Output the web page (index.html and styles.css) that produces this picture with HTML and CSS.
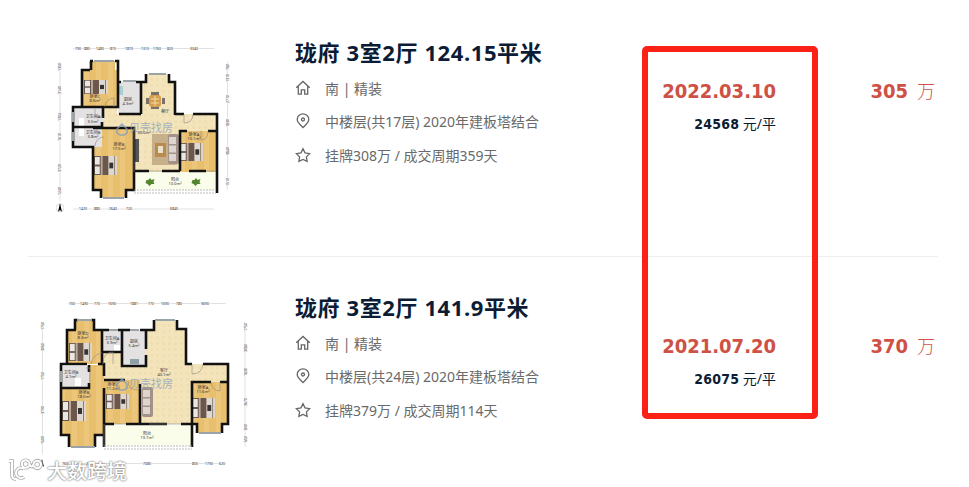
FILE: index.html
```
<!DOCTYPE html>
<html lang="zh-CN">

<head>
    <meta charset="UTF-8">
    <meta name="viewport" content="width=device-width, initial-scale=1.0">
    <title>珑府 成交记录</title>
    <link rel="stylesheet" href="styles.css">
</head>

<body>
    <!-- Shared shapes -->
    <svg class="defs" width="0" height="0">
        <symbol id="home" viewBox="0 0 16 16">
            <path d="M1.2 7.8 8 1.5l6.800 6.300M3.300 6.300v7.900h3V9.800h3.400v4.400h3V6.300" />
        </symbol>
        <symbol id="pin" viewBox="0 0 16 16">
            <path d="M8 14.600C5 11.500 2.200 9.200 2.200 6.400a5.800 5.600 0 0 1 11.600 0C13.800 9.200 11 11.500 8 14.600z" />
            <circle class="dot" cx="8" cy="6.500" r="1.500" />
        </symbol>
        <symbol id="star" viewBox="0 0 16 16">
            <path d="M8 1.800 10 5.900l4.700.7-3.300 3.300.7 4.400L8 12.400l-4.100 1.900.7-4.400L1.300 6.600 6 5.900z" />
        </symbol>
        <symbol id="bed" viewBox="0 0 24 20" preserveAspectRatio="none">
            <rect width="24" height="20" fill="#6b574b" />
            <rect x="1" y="1" width="5" height="8" fill="#e9e7e3" />
            <rect x="1" y="11" width="5" height="8" fill="#e9e7e3" />
            <rect x="7" width="2" height="20" fill="#b8aa9c" />
            <rect x="15" width="9" height="20" fill="#ded8d0" />
            <rect x="16" y="7" width="4" height="6" fill="#333" />
            <rect x="21" width="1" height="20" fill="#8f7d70" />
        </symbol>
        <symbol id="sofa" viewBox="0 0 11 30">
            <rect width="11" height="30" rx="2" fill="#a3928a" />
            <path d="M1 3h7v7H1zM1 11.500h7v7H1zM1 20h7v7H1z" fill="#ddd4ce" />
        </symbol>
        <pattern id="wood" width="12" height="7" patternUnits="userSpaceOnUse">
            <rect width="12" height="7" fill="#e8bf6d" />
            <rect width="5" height="7" fill="#ecc67b" />
        </pattern>
        <pattern id="tile" width="6" height="6" patternUnits="userSpaceOnUse">
            <rect width="6" height="6" fill="#f3e4bc" />
            <path d="M0 0h3v3H0z" fill="#f0dfb2" />
        </pattern>
    </svg>

    <div class="page">
        <div class="listing">
            <svg class="plan" viewBox="28 2 240 254">
                <path class="tile" d="M103 107h14v7h24V82h5v-8h23v8h5v32h43v58H134v-44h-31z" />
                <path class="wood" d="M82 70h8v-9h25v9h3v37H82zM93 128h41v62h-8v7h-25v-7h-8zM180 131h37v41h-37z" />
                <path class="bath" d="M118 81h23v33h-23zM73 107h30v19H73zM73 127h29v20H73z" />
                <path class="balcony" d="M134 172h82v18h-82z" />
                <rect x="152" y="134" width="25" height="31" fill="#c6b08b" />
                <rect x="155" y="143" width="11" height="14" fill="#b98c4c" />
                <rect x="158" y="146" width="5" height="7" fill="#e7e0ce" />
                <use href="#sofa" x="168" y="134" width="11" height="30" />
                <use href="#bed" x="84" y="80" width="24" height="14" />
                <use href="#bed" x="94" y="156" width="23" height="19" />
                <use href="#bed" x="180" y="143" width="23" height="18" />
                <rect x="135" y="139" width="4" height="23" fill="#555" />
                <path class="white" d="M79 118h5v8h-5zM79 128h5v8h-5z" />
                <path d="M118 86h5v9h-5z" fill="#a9ced2" />
                <path d="M151 92h8v4h-8zM151 105h8v4h-8zM146 98h3v6h-3zM162 98h3v6h-3z" fill="#77716b" />
                <rect x="149" y="95" width="12" height="12" rx="3" fill="#d69d4c" />
                <path d="M151 99h8M151 103h8M155 96v10" stroke="#f2dcaf" />
                <path class="wall" d="M91 70v-9M115 61h3v9M90 70h-8v37h36V70M90 61h3M82 107h-9v40h20v43h8v8M126 198v-8h8v-62H93M103 107v11M73 127h29v-5M118 82h3M136 82h10v-8M169 74v8h6v33M119 114h22M141 82v32M175 114h9M193 114h24v79M180 171v-40h7M208 131h9M134 171h15M162 171h18M189 171h17M134 190h-8" />
                <path class="window" d="M94 61h20M123 81h13M149 74h17M103 198h21M73 112v10M73 132v9" />
                <path class="door" d="M105 107a9 9 0 0 1 9-9v9M95 109v8h8M95 146a9 9 0 0 1 9-9M184 114v9q9 0 9-9M201 131v9q7 0 7-9M149 171h13M134 128v44M206 171h10" />
                <path class="rail" d="M134 190h82M134 193h82" />
                <g fill="#52862c">
                    <path d="m150 178 1.500 2 3-1-1 3 1 2-3 0-2 2-2-2-2-1 1-3 2 0zM196 178l1.500 2 3-1-1 3 1 2-3 0-2 2-2-2-2-1 1-3 2 0z" />
                </g>
                <g class="room">
                    <text x="95" y="98">卧室C</text><text x="95" y="102">8.6m²</text>
                    <text x="128" y="101">厨房</text><text x="128" y="105">4.3m²</text>
                    <text x="93" y="118">卫生间A</text><text x="93" y="123">3.5m²</text>
                    <text x="93" y="134">卫生间B</text><text x="93" y="138">3.8m²</text>
                    <text x="119" y="146">卧室B</text><text x="119" y="150">17.5m²</text>
                    <text x="165" y="113">餐厅</text><text x="144" y="134">30.0m²</text>
                    <text x="194" y="136">卧室A</text><text x="194" y="140">10.1m²</text>
                    <text x="175" y="181">阳台</text><text x="175" y="185">10.0m²</text>
                </g>
                <g class="brand">
                    <path d="m117 129 5-5 5 5v4l-3 2h-4l-3-2z" />
                    <text x="129" y="132">贝壳找房</text>
                </g>
                <g class="scale">
                    <path d="M73 48.500h141M73 209h141M60 62v139M227.500 62v128" />
                </g>
                <g class="sizes">
                    <text x="78" y="50">790</text><text x="87" y="50">880</text><text x="100" y="50">1480</text><text x="113" y="50">870</text><text x="129" y="50">1870</text><text x="145" y="50">1310</text><text x="157" y="50">1760</text><text x="170" y="50">820</text><text x="194" y="50">3340</text>
                    <text x="83" y="210">1420</text><text x="97" y="210">880</text><text x="113" y="210">2640</text><text x="129" y="210">720</text><text x="174" y="210">6840</text>
                </g>
                <g class="sizes" transform="rotate(-90)">
                    <text x="-67" y="61">1350</text><text x="-90" y="61">3140</text><text x="-117" y="61">1304</text><text x="-137" y="61">1610</text><text x="-168" y="61">3720</text><text x="-191" y="61">1240</text>
                    <text x="-67" y="229">780</text><text x="-78" y="229">1310</text><text x="-99" y="229">2710</text><text x="-123" y="229">1830</text><text x="-151" y="229">3840</text><text x="-182" y="229">1510</text>
                </g>
                <circle cx="60" cy="208" r="4" fill="none" stroke="#bbb" stroke-width=".5" />
                <path d="m60 203 2 9-2-2-2 2z" />
            </svg>
            <div class="info">
                <h2>珑府 3室2厅 124.15平米</h2>
                <ul>
                    <li><svg class="icon"><use href="#home" /></svg>南 | 精装</li>
                    <li><svg class="icon"><use href="#pin" /></svg>中楼层(共17层) 2020年建板塔结合</li>
                    <li><svg class="icon"><use href="#star" /></svg>挂牌308万 / 成交周期359天</li>
                </ul>
            </div>
            <div class="deal">
                <div class="date">2022.03.10</div>
                <div class="unit"><b>24568</b> 元/平</div>
            </div>
            <div class="price"><b>305</b><span>万</span></div>
        </div>

        <div class="listing">
            <svg class="plan" viewBox="28 257 240 230">
                <path class="tile" d="M102 352h20v14h23v-37h8v-9h23v9h9v35h43v18h-37v42h-87v-60h-2z" />
                <path class="wood" d="M67 330h9v-10h17v10h9v34H67zM61 388h28v-23h15v59H96v12h0v11H69v-12h-8zM104 380h36v44h-36zM191 382h37v42h-6v9h-25v-9h-6z" />
                <path class="bath" d="M103 330h19v22h-19zM123 330h22v36h-22zM61 366h28v21H61z" />
                <path class="balcony" d="M104 425h88v21h-88z" />
                <use href="#bed" x="69" y="343" width="23" height="18" />
                <use href="#bed" x="62" y="401" width="24" height="20" />
                <use href="#bed" x="106" y="394" width="23" height="15" />
                <use href="#bed" x="192" y="398" width="23" height="20" />
                <use href="#sofa" x="142" y="387" width="11" height="30" />
                <path class="white" d="M114 345h6v6h-6zM75 378h6v8h-6z" />
                <path d="M130 359h9v5h-9z" fill="#8da1a7" />
                <path class="wood" d="M95 423h9v12h-9z" />
                <path class="wall" d="M75 330v-10h3M91 320h3v10h8v34M76 330h-9v34h-6v71h8v12M95 447v-12h9v12M104 435v-11M61 388h28v-5M89 365v7M67 364h20M98 364h6v12M102 330h7M118 330h12M140 330h6v19M146 355v11h-24v-36M146 330h8v-10M177 320v9h9v35h6M203 364h25v60h-6v9M197 433v-9h-5v-42h19M220 382h8M104 388v36h10M126 424h22M140 424v-40M122 352h-19M104 380h21M167 424h-20M181 424h11v23" />
                <path class="window" d="M77 320h15M109 330h9M130 330h9M155 320h20M71 447h24M61 371v11M199 433h22" />
                <path class="door" d="M91 364q2-10 11-11M103 364q0-12 10-12v12M90 382v-14h-4M192 364v10q10 0 11-10M211 382q1 9 9 9v-9M128 381q0 9 10 9M104 424v23M114 424h12M149 424h32" />
                <path class="rail" d="M104 446h88M104 449h88" />
                <g class="room">
                    <text x="83" y="335">卧室D</text><text x="83" y="339">8.3m²</text>
                    <text x="112" y="340">卫生间A</text><text x="112" y="344">3.9m²</text>
                    <text x="134" y="343">厨房</text><text x="134" y="347">5.4m²</text>
                    <text x="71" y="374">卫生间B</text><text x="71" y="378">4.1m²</text>
                    <text x="164" y="372">客厅</text><text x="164" y="376">40.1m²</text>
                    <text x="84" y="394">卧室B</text><text x="84" y="398">18.0m²</text>
                    <text x="113" y="386">卧室C</text><text x="113" y="390">11.2m²</text>
                    <text x="203" y="389">卧室A</text><text x="203" y="393">11.6m²</text>
                    <text x="147" y="435">阳台</text><text x="147" y="439">13.7m²</text>
                </g>
                <g class="brand">
                    <path d="m117 384 5-5 5 5v4l-3 2h-4l-3-2z" />
                    <text x="129" y="388">贝壳找房</text>
                </g>
                <g class="scale">
                    <path d="M68 303.500h158M62 463.500h164M42.500 322v132M245 322v125" />
                </g>
                <g class="sizes">
                    <text x="72" y="305">700</text><text x="84" y="305">1490</text><text x="97" y="305">770</text><text x="112" y="305">1690</text><text x="134" y="305">1881</text><text x="151" y="305">770</text><text x="165" y="305">1690</text><text x="179" y="305">780</text><text x="205" y="305">3690</text>
                    <text x="65" y="465">760</text><text x="90" y="465">2190</text><text x="147" y="465">7080</text><text x="195" y="465">800</text><text x="209" y="465">1790</text><text x="222" y="465">620</text>
                </g>
                <g class="sizes" transform="rotate(-90)">
                    <text x="-326" y="44">1750</text><text x="-347" y="44">3060</text><text x="-376" y="44">1750</text><text x="-410" y="44">3790</text><text x="-440" y="44">1500</text>
                    <text x="-327" y="247">1750</text><text x="-348" y="247">3080</text><text x="-372" y="247">1830</text><text x="-402" y="247">3670</text><text x="-427" y="247">890</text><text x="-439" y="247">650</text>
                </g>
                <path d="m42 459 2 8-2-2-2 2z" />
            </svg>
            <div class="info">
                <h2>珑府 3室2厅 141.9平米</h2>
                <ul>
                    <li><svg class="icon"><use href="#home" /></svg>南 | 精装</li>
                    <li><svg class="icon"><use href="#pin" /></svg>中楼层(共24层) 2020年建板塔结合</li>
                    <li><svg class="icon"><use href="#star" /></svg>挂牌379万 / 成交周期114天</li>
                </ul>
            </div>
            <div class="deal">
                <div class="date">2021.07.20</div>
                <div class="unit"><b>26075</b> 元/平</div>
            </div>
            <div class="price"><b>370</b><span>万</span></div>
        </div>

        <div class="highlight"></div>

        <div class="watermark">
            <svg viewBox="0 0 38 26">
                <path class="shade" d="M3 4h3v14q0 4 4 4M18 12a5 5 0 1 0 0 8M23.500 7a3.800 3.800 0 1 1-7.600 0 3.800 3.800 0 0 1 7.600 0q2 5 4 0a3.800 3.800 0 1 1 0 1" />
                <path d="M3 4h3v14q0 4 4 4M18 12a5 5 0 1 0 0 8M23.500 7a3.800 3.800 0 1 1-7.600 0 3.800 3.800 0 0 1 7.600 0q2 5 4 0a3.800 3.800 0 1 1 0 1" />
            </svg>
            <span>大数跨境</span>
        </div>
    </div>
</body>

</html>
```
FILE: styles.css
```
body {
    margin: 0;
    background-color: #fff;
    font-family: "Noto Sans", "Noto Sans CJK SC", sans-serif;
}

.defs {
    position: absolute;
}

.page {
    position: relative;
    box-sizing: border-box;
    width: 969px;
    height: 487px;
    padding: 2px 31px 0 28px;
    overflow: hidden;
}

.listing {
    display: grid;
    grid-template-columns: 267px 340px 141px 159px;
    box-sizing: border-box;
    height: 255px;
    border-bottom: 1px solid #eee;
}

.listing:nth-child(2) {
    height: 230px;
    border-bottom: none;
}

/* Text columns */
.info {
    padding-top: 35px;
}

h2 {
    margin: 0 0 4px;
    font-size: 22px;
    line-height: 30px;
    letter-spacing: 0.6px;
    color: #0c1c34;
    white-space: nowrap;
}

ul {
    margin: 0;
    padding: 0;
    list-style: none;
}

li {
    display: flex;
    align-items: center;
    height: 33.5px;
    font-size: 14px;
    color: #6a6a6a;
    white-space: nowrap;
}

.icon {
    width: 16px;
    height: 16px;
    margin-right: 14px;
    fill: none;
    stroke: #666;
    stroke-width: 1.3;
}

.icon .dot {
    fill: #666;
    stroke: none;
}

.deal {
    padding-top: 73px;
    text-align: right;
    white-space: nowrap;
}

.date,
.deal b,
.price b {
    font-family: "DejaVu Sans Condensed", "DejaVu Sans", sans-serif;
    font-stretch: condensed;
    font-weight: bold;
}

.date {
    font-size: 20px;
    line-height: 32px;
    color: #cf5145;
}

.unit {
    font-size: 14px;
    line-height: 34px;
    color: #0c1c34;
}

.unit b {
    letter-spacing: 0.2px;
}

.price {
    padding-top: 73px;
    font-size: 18px;
    font-weight: 300;
    line-height: 32px;
    text-align: right;
    color: #cf5145;
}

.price b {
    margin-right: 9px;
    font-size: 20px;
}

/* Floor plans */
.plan {
    width: 240px;
    height: 100%;
}

.tile {
    fill: url(#tile);
}

.wood {
    fill: url(#wood);
}

.bath {
    fill: #e3e1e1;
}

.balcony {
    fill: #fbfdeb;
}

.white {
    fill: #fff;
}

.wall {
    fill: none;
    stroke: #111;
    stroke-width: 2.6;
}

.window {
    fill: none;
    stroke: #9aa3a8;
    stroke-width: 2;
}

.door {
    fill: none;
    stroke: #8f8a80;
    stroke-width: 0.6;
}

.rail {
    stroke: #aaa;
    stroke-width: 0.8;
    stroke-dasharray: 2 1;
}

.room {
    font-size: 4px;
    text-anchor: middle;
    fill: #333;
}

.brand {
    font-size: 11px;
    fill: #8ea6bf;
    opacity: 0.8;
}

.brand path {
    fill: none;
    stroke: #7f9fc4;
    stroke-width: 1.5;
}

.scale {
    fill: none;
    stroke: #ccc;
    stroke-width: 0.6;
}

.sizes {
    font-size: 3.4px;
    text-anchor: middle;
    fill: #222;
    stroke: #fff;
    stroke-width: 0.8;
    paint-order: stroke;
}

/* Marks over the list */
.highlight {
    position: absolute;
    top: 46px;
    left: 642px;
    box-sizing: border-box;
    width: 176px;
    height: 373px;
    border: 6px solid #fb2116;
    border-radius: 5px;
}

.watermark {
    position: absolute;
    top: 455px;
    left: 6px;
    display: flex;
    align-items: center;
    gap: 3px;
    height: 30px;
    font-size: 20px;
    font-weight: 500;
    color: #fff;
    text-shadow: 0 0 2px #777, 0 0 2px #999;
}

.watermark svg {
    width: 38px;
    height: 26px;
    fill: none;
    stroke: #fff;
    stroke-width: 2;
}

.watermark .shade {
    stroke: #aaa;
    stroke-width: 3.6;
}
```
